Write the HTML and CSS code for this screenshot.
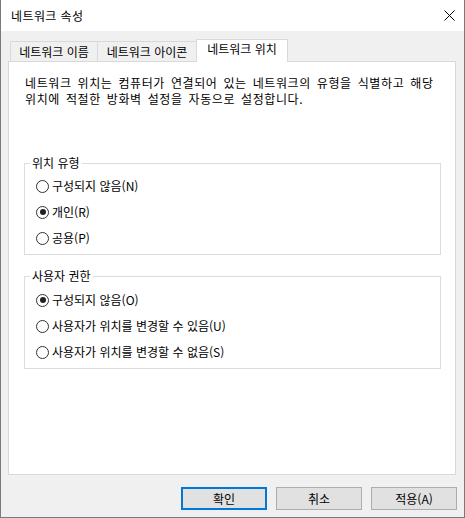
FILE: index.html
```html
<!DOCTYPE html>
<html lang="ko">
<head>
<meta charset="utf-8">
<title>네트워크 속성</title>
<link rel="stylesheet" href="styles.css">
</head>
<body>
<div class="window">
  <div class="titlebar">
    <span class="title">네트워크 속성</span>
    <span class="close">
      <svg width="11" height="11" viewBox="0 0 11 11"><path d="M0.5 0.5L10.5 10.5M10.5 0.5L0.5 10.5" stroke="#000" stroke-width="1" fill="none"/></svg>
    </span>
  </div>
  <div class="content">
    <div class="tabs">
      <div class="tab t1">네트워크 이름</div>
      <div class="tab t2">네트워크 아이콘</div>
      <div class="tab active">네트워크 위치</div>
    </div>
    <div class="panel">
      <p class="desc">네트워크 위치는 컴퓨터가 연결되어 있는 네트워크의 유형을 식별하고 해당<br>위치에 적절한 방화벽 설정을 자동으로 설정합니다.</p>
      <fieldset class="group g1">
        <legend>위치 유형</legend>
        <div class="row"><span class="radio"></span><span class="label">구성되지 않음(N)</span></div>
        <div class="row"><span class="radio checked"></span><span class="label">개인(R)</span></div>
        <div class="row"><span class="radio"></span><span class="label">공용(P)</span></div>
      </fieldset>
      <fieldset class="group g2">
        <legend>사용자 권한</legend>
        <div class="row"><span class="radio checked"></span><span class="label">구성되지 않음(O)</span></div>
        <div class="row"><span class="radio"></span><span class="label">사용자가 위치를 변경할 수 있음(U)</span></div>
        <div class="row"><span class="radio"></span><span class="label">사용자가 위치를 변경할 수 없음(S)</span></div>
      </fieldset>
    </div>
    <div class="buttons">
      <div class="btn default">확인</div>
      <div class="btn">취소</div>
      <div class="btn">적용(A)</div>
    </div>
  </div>
</div>
</body>
</html>
```
FILE: styles.css
```css
* { box-sizing: border-box; }
html, body { margin: 0; padding: 0; background: #f0f0f0; }
body {
  font-family: "Noto Sans CJK KR", "Noto Sans", sans-serif;
  font-size: 12px;
  color: #000;
}
.window {
  width: 465px;
  height: 518px;
  border: 1px solid #7a7a7a;
  border-top: none;
  background: #f0f0f0;
  display: flex;
  flex-direction: column;
}
.titlebar {
  height: 31px;
  background: #fff;
  display: flex;
  align-items: center;
  justify-content: space-between;
  padding: 0 9px 0 10px;
}
.title { line-height: 16px; font-size: 12px; letter-spacing: 0.4px; }
.close { display: flex; width: 11px; height: 11px; }
.content {
  flex: 1;
  display: flex;
  flex-direction: column;
  padding: 8px 7px 7px 7px;
}
.tabs {
  display: flex;
  align-items: flex-end;
  height: 22px;
  padding-left: 2px;
  position: relative;
  z-index: 1;
}
.tab {
  height: 20px;
  border: 1px solid #d9d9d9;
  border-bottom: none;
  background: #f0f0f0;
  display: flex;
  align-items: center;
  justify-content: center;
  line-height: 16px;
  white-space: nowrap;
}
.t1 { width: 88px; }
.t2 { width: 100px; margin-left: -1px; }
.tab.active {
  width: 92px;
  height: 23px;
  margin-left: -1px;
  margin-bottom: -1px;
  background: #fff;
  padding-bottom: 4px;
  position: relative;
}
.panel {
  height: 414px;
  margin-right: 1px;
  background: #fff;
  border: 1px solid #d9d9d9;
  padding-top: 13px;
}
.desc {
  margin: 0 0 48px 0;
  padding-left: 16px;
  line-height: 16px;
  letter-spacing: 0.6px;
  word-spacing: 2px;
  white-space: nowrap;
}
.group {
  margin: 0 14px 0 15px;
  border: 1px solid #dcdcdc;
  padding: 2px 0 3px 5px;
  min-width: 0;
}
.g2 { margin-top: 13px; padding-top: 3px; }
.group legend {
  padding: 0 2px;
  line-height: 16px;
}
.row {
  height: 26px;
  display: flex;
  align-items: center;
  padding-left: 6px;
  line-height: 16px;
}
.radio {
  width: 13px;
  height: 13px;
  border: 1px solid #333;
  border-radius: 50%;
  background: #fff;
  display: flex;
  align-items: center;
  justify-content: center;
  flex: none;
}
.radio.checked::after {
  content: "";
  width: 6px;
  height: 6px;
  border-radius: 50%;
  background: #222;
}
.label { margin-left: 3px; white-space: nowrap; }
.buttons {
  display: flex;
  justify-content: flex-end;
  gap: 9px;
  margin-top: 12px;
}
.btn {
  width: 86px;
  height: 23px;
  background: #e1e1e1;
  border: 1px solid #adadad;
  display: flex;
  align-items: center;
  justify-content: center;
  line-height: 16px;
}
.btn.default { border: 2px solid #0078d7; }
```
